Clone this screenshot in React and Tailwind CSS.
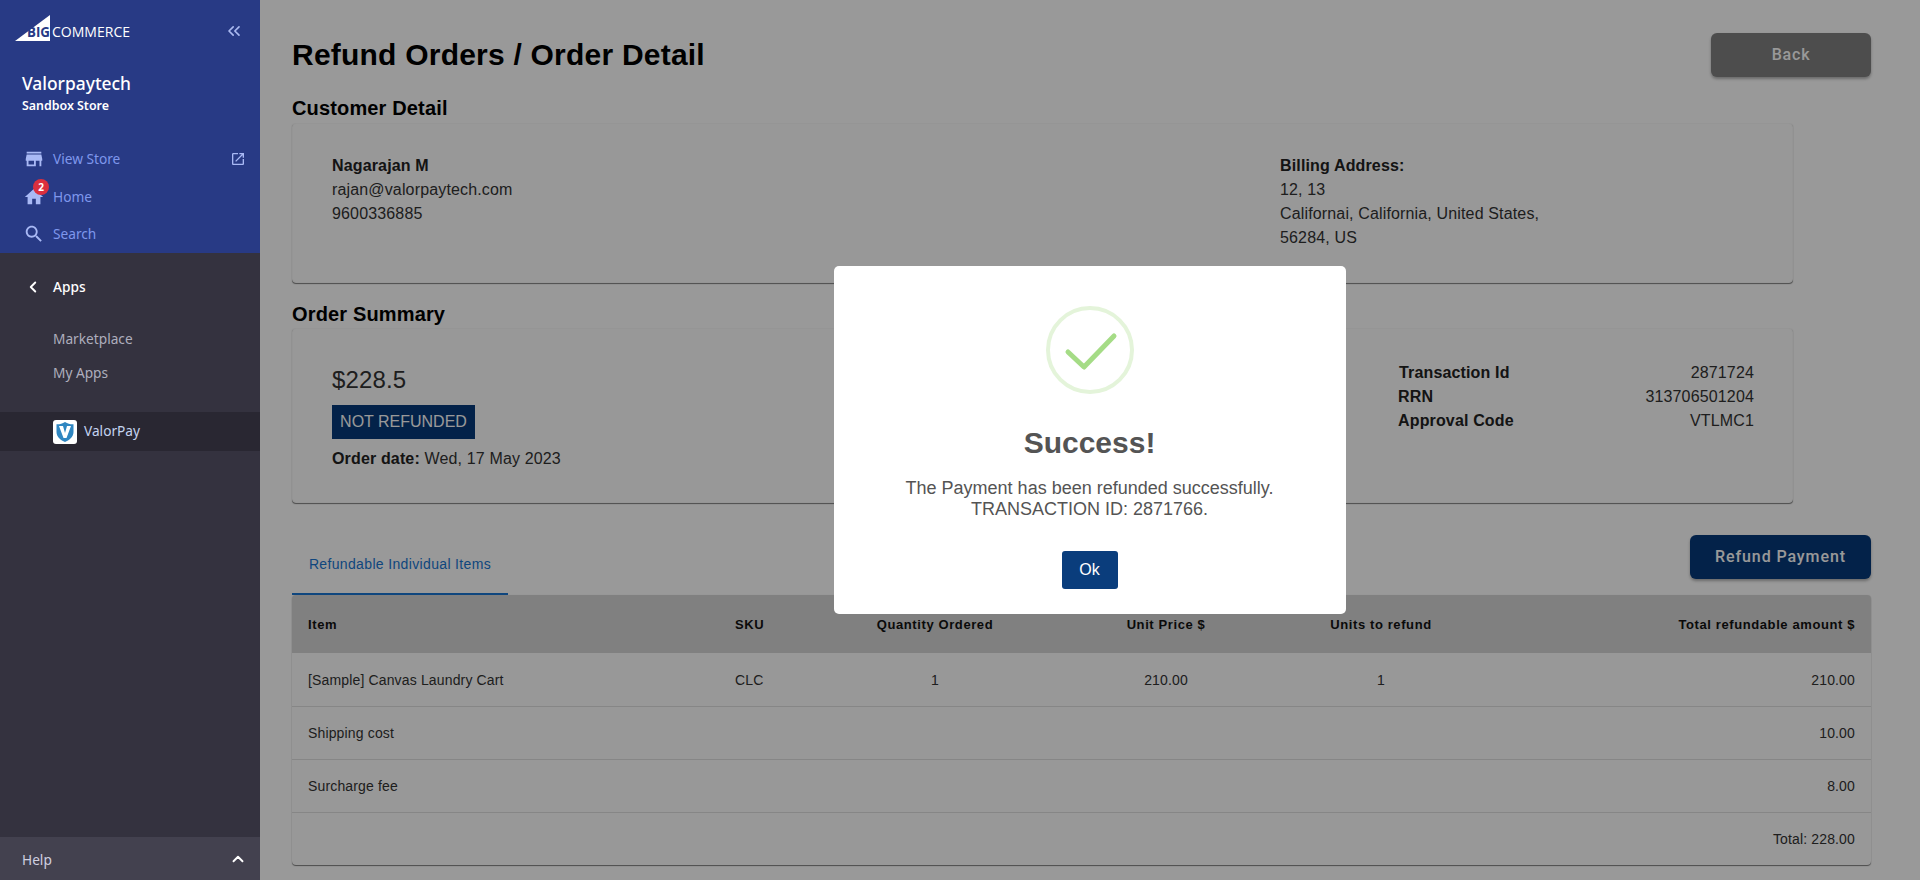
import { ChevronsLeft, ChevronLeft, ChevronUp } from 'lucide-react';

const arial = "font-['Liberation_Sans',Arial,sans-serif]";

function MatIcon({ d, className }) {
  return (
    <svg viewBox="0 0 24 24" fill="currentColor" className={className}>
      <path d={d} />
    </svg>
  );
}

const STORE = 'M20 4H4v2h16V4zm1 10v-2l-1-5H4l-1 5v2h1v6h10v-6h4v6h2v-6h1zm-9 4H6v-4h6v4z';
const HOME = 'M10 20v-6h4v6h5v-8h3L12 3 2 12h3v8z';
const SEARCH = 'M15.5 14h-.79l-.28-.27C15.41 12.59 16 11.11 16 9.5 16 5.91 13.09 3 9.5 3S3 5.91 3 9.5 5.91 16 9.5 16c1.61 0 3.09-.59 4.23-1.57l.27.28v.79l5 4.99L20.49 19l-4.99-5zm-6 0C7.01 14 5 11.99 5 9.5S7.01 5 9.5 5 14 7.01 14 9.5 11.99 14 9.5 14z';
const OPEN = 'M19 19H5V5h7V3H5c-1.11 0-2 .9-2 2v14c0 1.1.89 2 2 2h14c1.1 0 2-.9 2-2v-7h-2v7zM14 3v2h3.59l-9.83 9.83 1.41 1.41L19 6.41V10h2V3h-7z';

function Logo() {
  return (
    <svg width="140" height="28" viewBox="0 0 140 28">
      <path d="M0 26 L35 0 L35 26 Z" fill="#fff" />
      <text x="12" y="22" fontSize="15" fontWeight="700" fill="#283a85" fontFamily="Open Sans, sans-serif" textLength="23" lengthAdjust="spacingAndGlyphs">BIG</text>
      <text x="37" y="22" fontSize="15" fontWeight="400" fill="#fff" fontFamily="Open Sans, sans-serif" textLength="78" lengthAdjust="spacingAndGlyphs">COMMERCE</text>
    </svg>
  );
}

function ValorLogo() {
  return (
    <div className="w-6 h-6 rounded-[3px] bg-white flex items-center justify-center">
      <svg width="20" height="22" viewBox="0 0 20 22">
        <path d="M10 1 C7 3 4 3.4 1.5 3.2 L1.5 11 C1.5 16 6 19.5 10 21 C14 19.5 18.5 16 18.5 11 L18.5 3.2 C16 3.4 13 3 10 1 Z" fill="#2f86c1" />
        <path d="M4 5 L8 5 L10 12 L12 5 L16 5 L11.5 17 L8.5 17 Z" fill="#fff" />
      </svg>
    </div>
  );
}

function Sidebar() {
  return (
    <aside className="w-[260px] h-screen shrink-0 flex flex-col bg-[#34323f] font-['Noto_Sans',sans-serif]">
      <div className="h-[253px] bg-[#283a85] shrink-0">
        <div className="flex items-start justify-between pl-[15px] pr-[16px] pt-[15px] h-[41px]">
          <Logo />
          <ChevronsLeft size={20} strokeWidth={2} className="text-[#aab9f0] mt-[6px]" />
        </div>
        <div className="pl-[22px] mt-[30px] text-white">
          <div className="text-[17.4px] leading-[24px] font-medium">Valorpaytech</div>
          <div className="text-[12.4px] leading-[18px] font-semibold mt-[2px]">Sandbox Store</div>
        </div>
        <nav className="mt-[25px] text-[13.7px] text-[#7f97ec]">
          <div className="h-[38px] flex items-center pl-[23px] pr-[14px]">
            <MatIcon d={STORE} className="w-[22px] h-[22px] text-[#a9b9f5]" />
            <span className="ml-[8px] pt-[1px] flex-1">View Store</span>
            <MatIcon d={OPEN} className="w-[16px] h-[16px] text-[#a9b9f5]" />
          </div>
          <div className="h-[37px] flex items-center pl-[23px]">
            <div className="relative">
              <MatIcon d={HOME} className="w-[22px] h-[22px] text-[#a9b9f5]" />
              <span className="absolute -top-[7px] left-[10px] w-4 h-4 rounded-full bg-[#db2f3e] text-white text-[10px] font-bold leading-4 text-center">2</span>
            </div>
            <span className="ml-[8px] pt-[1px]">Home</span>
          </div>
          <div className="h-[38px] flex items-center pl-[23px]">
            <MatIcon d={SEARCH} className="w-[22px] h-[22px] text-[#a9b9f5]" />
            <span className="ml-[8px] pt-[1px]">Search</span>
          </div>
        </nav>
      </div>

      <div className="flex-1">
        <div className="mt-[23px] h-[22px] flex items-center pl-[24px] text-white text-[13.7px] font-medium">
          <ChevronLeft size={18} strokeWidth={2.5} />
          <span className="ml-[11px] pt-[1px]">Apps</span>
        </div>
        <div className="mt-[30px] pl-[53px] text-[13.7px] text-[#aeaebd] leading-[22px]">
          <div>Marketplace</div>
          <div className="mt-[12px]">My Apps</div>
        </div>
        <div className="mt-[28px] h-[39px] bg-[#292732] flex items-center pl-[53px] text-[13.7px] text-[#c4d4f0]">
          <ValorLogo />
          <span className="ml-[7px]">ValorPay</span>
        </div>
      </div>

      <div className="h-[43px] bg-[#43414f] flex items-center justify-between pl-[22px] pr-[13px] text-[13.7px] text-[#d0d0e0]">
        <span className="pt-[3px]">Help</span>
        <ChevronUp size={18} strokeWidth={2.5} className="text-white" />
      </div>
    </aside>
  );
}

function Heading({ children, className }) {
  return <h2 className={`${arial} text-[20px] leading-[24px] font-bold tracking-[0.15px] text-black ${className}`}>{children}</h2>;
}

const cardClass = 'w-[1501px] rounded bg-[#fdfdfd] border border-[#f8f8f8] shadow-[0_1px_1px_rgba(0,0,0,0.5)]';

const rows = [
  ['[Sample] Canvas Laundry Cart', 'CLC', '1', '210.00', '1', '210.00'],
  ['Shipping cost', '', '', '', '', '10.00'],
  ['Surcharge fee', '', '', '', '', '8.00'],
  ['', '', '', '', '', 'Total: 228.00'],
];

function ItemsTable() {
  const widths = ['w-[427px]', 'w-[111px]', 'w-[210px]', 'w-[252px]', 'w-[178px]', 'w-[401px]'];
  const aligns = ['text-left', 'text-left', 'text-center', 'text-center', 'text-center', 'text-right'];
  const head = ['Item', 'SKU', 'Quantity Ordered', 'Unit Price $', 'Units to refund', 'Total refundable amount $'];

  return (
    <div className="w-[1579px] rounded overflow-hidden bg-[#fdfdfd] shadow-[0_1px_1px_rgba(0,0,0,0.5),0_0_1px_rgba(0,0,0,0.15)]">
      <table className={`w-full table-fixed border-collapse text-[14px] tracking-[0.15px] ${arial}`}>
        <thead>
          <tr className="h-[58px] bg-[#d5d5d5]">
            {head.map((h, i) => (
              <th key={h} className={`${widths[i]} ${aligns[i]} px-4 pt-[2px] font-bold text-[#111] text-[13px] tracking-[0.6px]`}>{h}</th>
            ))}
          </tr>
        </thead>
        <tbody>
          {rows.map((row, r) => (
            <tr key={r} className={`h-[53px] text-[#333] ${r < rows.length - 1 ? 'border-b border-[#e0e0e0]' : ''}`}>
              {row.map((c, i) => (
                <td key={i} className={`${aligns[i]} px-4 pt-[2px]`}>{c}</td>
              ))}
            </tr>
          ))}
        </tbody>
      </table>
    </div>
  );
}

function SuccessModal() {
  return (
    <div className="absolute inset-0 bg-black/40 flex items-start justify-center">
      <div className={`mt-[266px] ml-[-1px] w-[512px] h-[348px] bg-white rounded-[5px] flex flex-col items-center ${arial}`}>
        <svg width="88" height="88" viewBox="0 0 88 88" className="mt-[40px]">
          <circle cx="44" cy="44" r="42" fill="none" stroke="#e4f4da" strokeWidth="4" />
          <path d="M22 46 L38 61 L68 30" fill="none" stroke="#a5dc86" strokeWidth="5" strokeLinecap="round" strokeLinejoin="round" />
        </svg>
        <h3 className="mt-[30px] text-[30px] leading-[38px] font-bold text-[#545454]">Success!</h3>
        <p className="mt-[16px] text-[18px] leading-[21px] text-[#545454] text-center">
          The Payment has been refunded successfully.<br />TRANSACTION ID: 2871766.
        </p>
        <button className="mt-[31px] w-[56px] h-[38px] rounded-[3px] bg-[#0a3d7c] text-white text-[16px]">Ok</button>
      </div>
    </div>
  );
}

export default function App() {
  return (
    <div className="flex w-full h-screen overflow-hidden bg-white">
      <Sidebar />
      <main className="relative flex-1 h-screen overflow-hidden pl-8">
        <div className="w-[1579px] flex items-start justify-between pt-[33px]">
          <h1 className={`${arial} text-[30px] leading-[44px] font-bold tracking-[0.22px] text-black`}>Refund Orders / Order Detail</h1>
          <button className="w-[160px] h-[44px] rounded-md bg-[#808080] text-white font-['Roboto',sans-serif] text-[16px] font-medium tracking-[0.8px] shadow-[0_2px_3px_rgba(0,0,0,0.3)]">Back</button>
        </div>

        <Heading className="mt-[19px]">Customer Detail</Heading>
        <section className={`${cardClass} mt-[3px] h-[160px] pt-[30px] pl-[39px] flex ${arial} text-[16px] leading-[24px] tracking-[0.15px] text-[#333]`}>
          <div className="w-[948px]">
            <div className="font-bold text-[#222]">Nagarajan M</div>
            <div>rajan@valorpaytech.com</div>
            <div>9600336885</div>
          </div>
          <div>
            <div className="font-bold text-[#222]">Billing Address:</div>
            <div>12, 13</div>
            <div>Californai, California, United States,</div>
            <div>56284, US</div>
          </div>
        </section>

        <Heading className="mt-[19px]">Order Summary</Heading>
        <section className={`${cardClass} mt-[2px] h-[175px] pt-[33px] pl-[39px] pr-[38px] flex justify-between ${arial} text-[16px] leading-[24px] tracking-[0.15px] text-[#333]`}>
          <div>
            <div className="text-[24px] leading-[36px]">$228.5</div>
            <div className="mt-[7px] w-[143px] h-[34px] bg-[#05397a] text-white tracking-normal flex items-center justify-center">NOT REFUNDED</div>
            <div className="mt-[8px]"><b className="text-[#222]">Order date:</b> Wed, 17 May 2023</div>
          </div>
          <div className="w-[356px] -mt-px">
            <div className="flex justify-between"><b className="pl-[1px] text-[#222]">Transaction Id</b><span>2871724</span></div>
            <div className="flex justify-between"><b className="text-[#222]">RRN</b><span>313706501204</span></div>
            <div className="flex justify-between"><b className="text-[#222]">Approval Code</b><span>VTLMC1</span></div>
          </div>
        </section>

        <div className="w-[1579px] flex items-start justify-between mt-[32px] h-[60px]">
          <div className={`w-[216px] h-[60px] border-b-2 border-[#1976d2] flex items-center justify-center text-[14px] tracking-[0.35px] text-[#1976d2] ${arial}`}>
            Refundable Individual Items
          </div>
          <button className="w-[181px] h-[44px] rounded-md bg-[#05397a] text-white font-['Roboto',sans-serif] text-[16px] font-medium tracking-[0.9px] shadow-[0_2px_3px_rgba(0,0,0,0.3)]">Refund Payment</button>
        </div>

        <ItemsTable />
        <SuccessModal />
      </main>
    </div>
  );
}
